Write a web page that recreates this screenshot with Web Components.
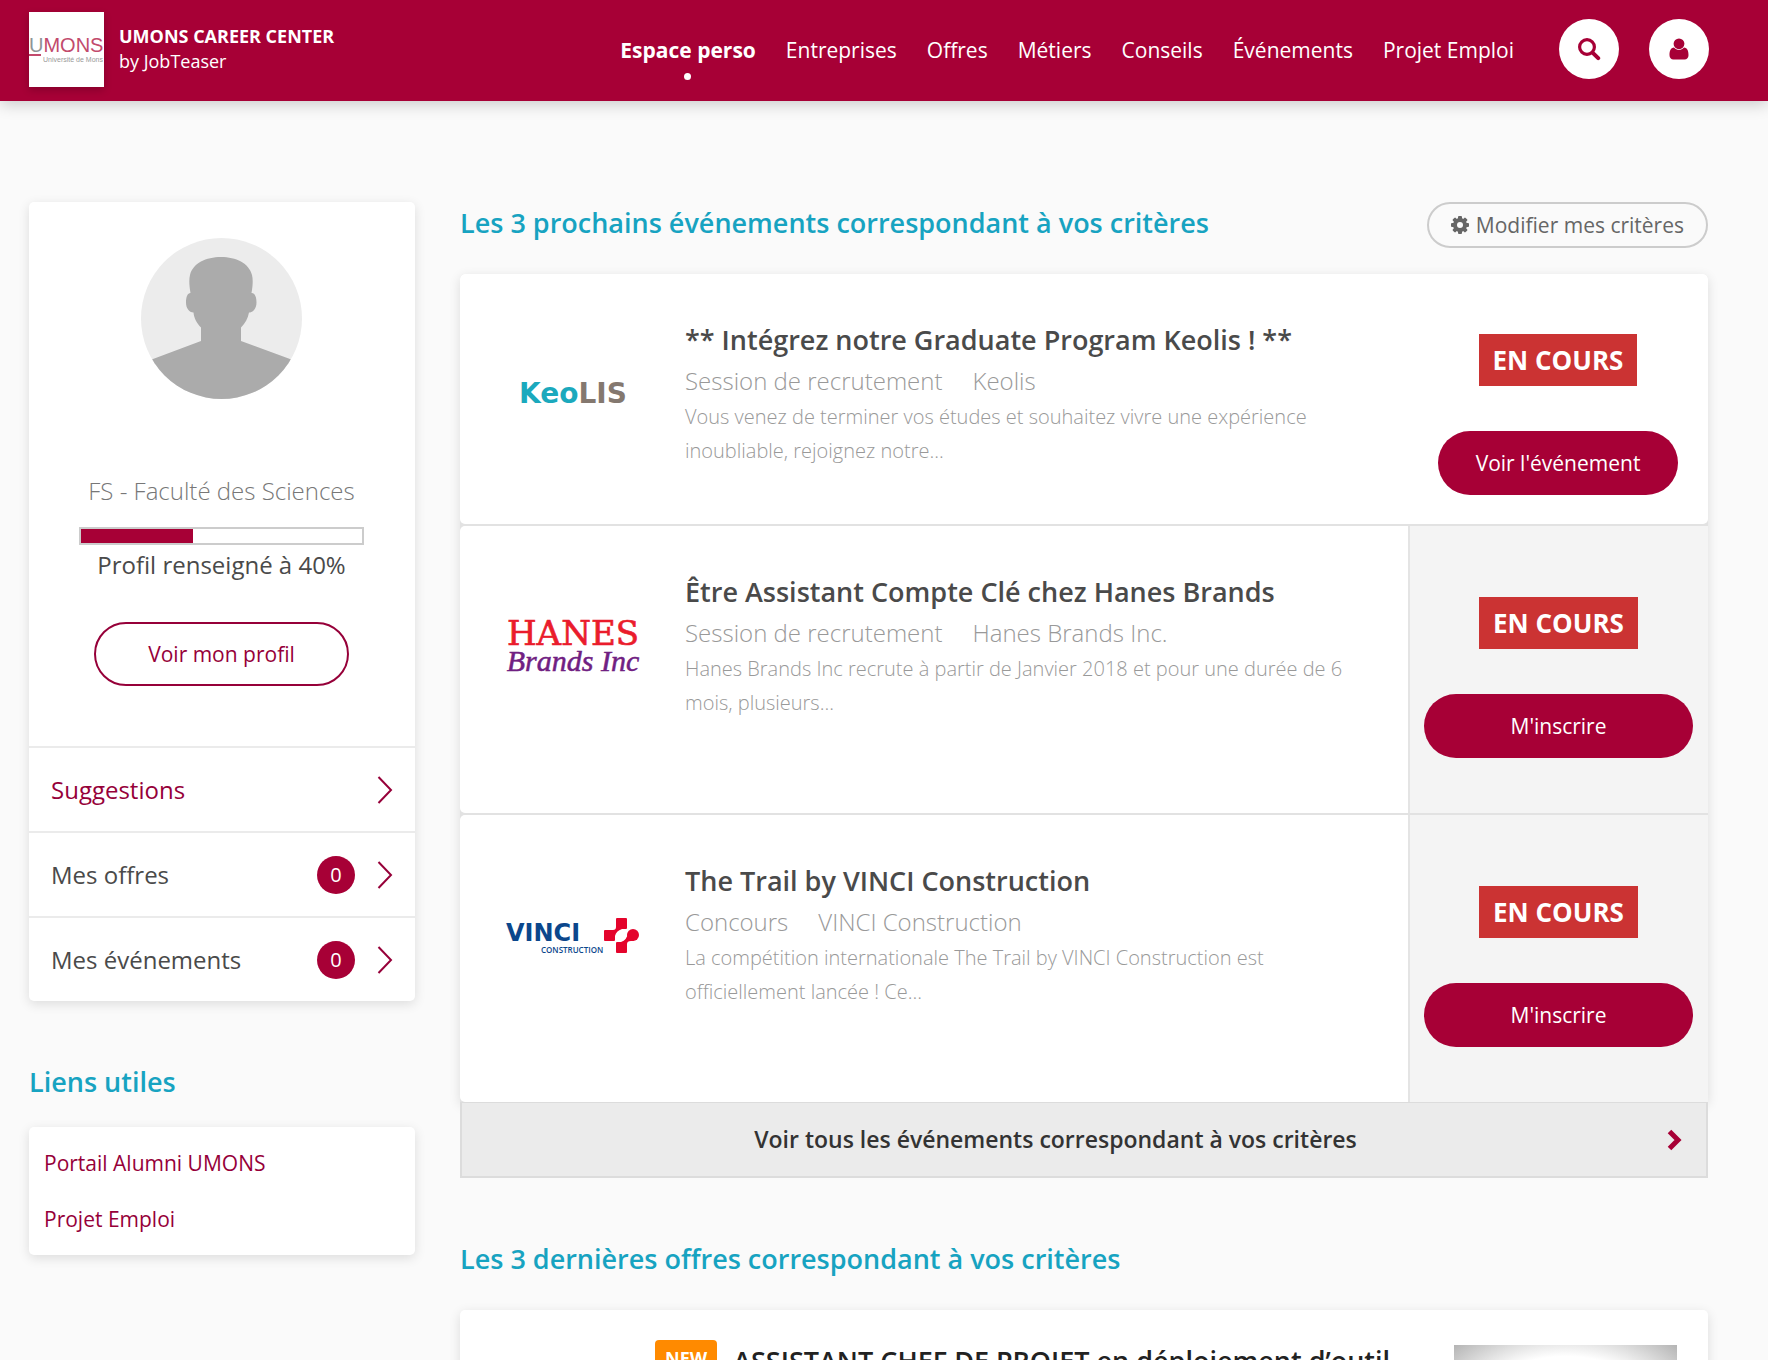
<!DOCTYPE html>
<html lang="fr">
<head>
    <meta charset="utf-8">
    <meta name="viewport" content="width=device-width, initial-scale=1">
    <title>UMONS Career Center by JobTeaser</title>
    <style>
        :root {
            --brand: #a70036;
            --link: #960039;
            --accent: #17a3c1;
            --text: #4a4a4a;
        }
        body {
            margin: 0;
            height: 100vh;
            overflow: hidden;
            background: #fafafa;
            color: var(--text);
            font-family: "Open Sans", sans-serif;
            font-size: 21px;
        }
    </style>
</head>
<body>
    <career-page>
        <career-header slot="header">
            <nav-item current>Espace perso</nav-item>
            <nav-item>Entreprises</nav-item>
            <nav-item>Offres</nav-item>
            <nav-item>Métiers</nav-item>
            <nav-item>Conseils</nav-item>
            <nav-item>Événements</nav-item>
            <nav-item>Projet Emploi</nav-item>
        </career-header>

        <profile-card slot="aside" value="40">
            <span slot="faculty">FS - Faculté des Sciences</span>
            <profile-link highlight>Suggestions</profile-link>
            <profile-link count="0">Mes offres</profile-link>
            <profile-link count="0">Mes événements</profile-link>
        </profile-card>
        <section-title slot="aside" class="spaced">Liens utiles</section-title>
        <link-list slot="aside">
            <a href="#">Portail Alumni UMONS</a>
            <a href="#">Projet Emploi</a>
        </link-list>

        <section-title>Les 3 prochains événements correspondant à vos critères
            <criteria-button slot="action">Modifier mes critères</criteria-button>
        </section-title>
        <event-list>
            <event-card action="Voir l'événement">
                <company-logo slot="logo" name="keolis"></company-logo>
                <span slot="title">** Intégrez notre Graduate Program Keolis ! **</span>
                <span slot="kind">Session de recrutement</span>
                <span slot="company">Keolis</span>
                Vous venez de terminer vos études et souhaitez vivre une expérience inoubliable, rejoignez notre...
            </event-card>
            <event-card action="M'inscrire" shaded>
                <company-logo slot="logo" name="hanes"></company-logo>
                <span slot="title">Être Assistant Compte Clé chez Hanes Brands</span>
                <span slot="kind">Session de recrutement</span>
                <span slot="company">Hanes Brands Inc.</span>
                Hanes Brands Inc recrute à partir de Janvier 2018 et pour une durée de 6 mois, plusieurs...
            </event-card>
            <event-card action="M'inscrire" shaded>
                <company-logo slot="logo" name="vinci"></company-logo>
                <span slot="title">The Trail by VINCI Construction</span>
                <span slot="kind">Concours</span>
                <span slot="company">VINCI Construction</span>
                La compétition internationale The Trail by VINCI Construction est officiellement lancée ! Ce...
            </event-card>
            <span slot="more">Voir tous les événements correspondant à vos critères</span>
        </event-list>

        <section-title class="spaced">Les 3 dernières offres correspondant à vos critères</section-title>
        <offer-card>ASSISTANT CHEF DE PROJET en déploiement d’outil</offer-card>
    </career-page>

    <script>
        // Base element: every component gives its markup and its styles
        class BaseElement extends HTMLElement {

            constructor() {
                super();
                this.attachShadow({ mode: "open" });
            }

            getTemplate() {
                const template = document.createElement('template');
                template.innerHTML = `
                <style>
                    * { box-sizing: border-box; }
                    h2, h3, p { margin: 0; }
                    a { color: inherit; text-decoration: none; }
                    button { font: inherit; cursor: pointer; }
                    svg { display: block; }
                    ${this.getStyles()}
                </style>
                ${this.getMarkup()}
                `;
                return template;
            }

            connectedCallback() {
                if (!this.shadowRoot.firstChild) {
                    this.shadowRoot.appendChild(this.getTemplate().content.cloneNode(true));
                }
            }
        }

        class CareerPage extends BaseElement {
            getMarkup() {
                return `
                <slot name="header"></slot>
                <div class="columns">
                    <aside><slot name="aside"></slot></aside>
                    <main><slot></slot></main>
                </div>
                `;
            }
            getStyles() {
                return `
                :host { display: block; }
                .columns {
                    display: flex;
                    gap: 45px;
                    padding: 101px 60px 60px 29px;
                }
                aside { flex: 0 0 386px; }
                main { flex: 1; min-width: 0; }
                `;
            }
        }

        class CareerHeader extends BaseElement {
            getMarkup() {
                return `
                <header>
                    <a class="brand" href="#">
                        <svg class="logo" width="75" height="75" viewBox="0 0 75 75" font-family="Liberation Sans, sans-serif">
                            <rect width="75" height="75" fill="#fff"/>
                            <text x="0" y="40" font-size="20" fill="#8f9496">U<tspan fill="#c24a6c">MONS</tspan></text>
                            <rect y="42" width="12" height="2" fill="#c24a6c"/>
                            <text x="14" y="50" font-size="7" fill="#999">Université de Mons</text>
                        </svg>
                        <span><b>UMONS CAREER CENTER</b><br>by JobTeaser</span>
                    </a>
                    <nav><slot></slot></nav>
                    <div class="tools">
                        <button type="button" aria-label="Rechercher">
                            <svg width="24" height="24" viewBox="0 0 24 24" fill="none" stroke="currentColor" stroke-linecap="round">
                                <circle cx="10" cy="10" r="7.4" stroke-width="3.2"/>
                                <path d="M15.8 15.8l5.4 5.4" stroke-width="4"/>
                            </svg>
                        </button>
                        <button type="button" aria-label="Mon compte">
                            <svg width="20" height="22" viewBox="0 0 20 22" fill="currentColor">
                                <circle cx="10" cy="5.8" r="5.4"/>
                                <path d="M5 9.600c1.300 1.400 3 2.300 5 2.300s3.700-.9 5-2.300c3.200.3 4.500 3.100 4.500 7.600 0 2.600-1.600 4.300-3.900 4.300H4.400C2.100 21.500.5 19.800.5 17.200.5 12.700 1.800 9.900 5 9.600z"/>
                            </svg>
                        </button>
                    </div>
                </header>
                `;
            }
            getStyles() {
                return `
                :host { display: block; }
                header {
                    box-sizing: border-box;
                    display: flex;
                    align-items: center;
                    height: 101px;
                    padding: 0 59px 3px 29px;
                    background: var(--brand);
                    color: #fff;
                    box-shadow: 0 3px 15px rgba(0, 0, 0, .2);
                }
                .brand {
                    display: flex;
                    align-items: center;
                    gap: 15px;
                    margin-right: auto;
                    font-size: 18px;
                    line-height: 25px;
                }
                .logo { box-shadow: 0 3px 8px rgba(0, 0, 0, .2); }
                nav { display: flex; gap: 30px; padding-top: 2px; }
                .tools { display: flex; gap: 30px; margin-left: 45px; }
                button {
                    display: flex;
                    align-items: center;
                    justify-content: center;
                    width: 60px;
                    height: 60px;
                    padding: 0;
                    border: 0;
                    border-radius: 50%;
                    background: #fff;
                    color: var(--brand);
                }
                `;
            }
        }

        class NavItem extends BaseElement {
            getMarkup() {
                return `<a href="#"><slot></slot></a>`;
            }
            getStyles() {
                return `
                :host { display: block; position: relative; white-space: nowrap; }
                :host([current]) { font-weight: bold; }
                :host([current])::after {
                    content: "";
                    position: absolute;
                    top: 37px;
                    left: calc(50% - 4px);
                    width: 7px;
                    height: 7px;
                    border-radius: 50%;
                    background: #fff;
                }
                `;
            }
        }

        class ProfileCard extends BaseElement {
            getMarkup() {
                const value = this.getAttribute('value');
                return `
                <section>
                    <svg width="161" height="161" viewBox="0 0 161 161">
                        <clipPath id="round"><circle cx="80.5" cy="80.5" r="80.5"/></clipPath>
                        <g clip-path="url(#round)">
                            <rect width="161" height="161" fill="#ececec"/>
                            <path fill="#ababab" d="M49.500 55C48 46 48 41 49 37c3-12 16-18 31-18s28 6 31 18c1 4 1 10-.5 18 3.500 0 5 4 5 9.500s-3 10-7.500 10c-1 6-4 11-8 15V103l49 18c8 3 12 10 14 40H-1c2-30 5-37 13-40l48-18V89.500c-4-4-7-9-7.500-15-4.500 0-7.500-4.500-7.500-10s1.500-9.500 4.500-9.500z"/>
                        </g>
                    </svg>
                    <p class="faculty"><slot name="faculty"></slot></p>
                    <div class="bar" role="progressbar" aria-valuenow="${value}" aria-valuemin="0" aria-valuemax="100" aria-labelledby="label"><i></i></div>
                    <p id="label">Profil renseigné à ${value}%</p>
                    <a class="button" href="#">Voir mon profil</a>
                </section>
                <slot></slot>
                `;
            }
            getStyles() {
                return `
                :host {
                    display: block;
                    border-radius: 5px;
                    background: #fff;
                    box-shadow: 0 3px 12px rgba(0, 0, 0, .12);
                }
                section {
                    display: flex;
                    flex-direction: column;
                    align-items: center;
                    padding: 36px 51px 60px 50px;
                    font-size: 24px;
                    line-height: 36px;
                }
                .faculty {
                    margin: 74px 0 18px;
                    color: #777;
                    font-weight: 300;
                }
                .bar {
                    align-self: stretch;
                    height: 18px;
                    margin-bottom: 2px;
                    border: 2px solid #ccc;
                }
                .bar i {
                    display: block;
                    width: ${this.getAttribute('value')}%;
                    height: 100%;
                    background: var(--brand);
                }
                .button {
                    margin-top: 39px;
                    padding: 0 52px;
                    border: 2px solid var(--link);
                    border-radius: 32px;
                    color: var(--link);
                    font-size: 21px;
                    line-height: 60px;
                }
                `;
            }
        }

        class ProfileLink extends BaseElement {
            getMarkup() {
                const count = this.getAttribute('count');
                return `
                <a href="#">
                    <slot></slot>
                    ${count === null ? '' : `<span class="count">${count}</span>`}
                    <svg width="16" height="28" viewBox="0 0 16 28" fill="none" stroke="var(--link)" stroke-width="2">
                        <path d="M1.500 1l12.500 13L1.500 27"/>
                    </svg>
                </a>
                `;
            }
            getStyles() {
                return `
                :host { display: block; border-top: 2px solid #ebebeb; }
                :host([highlight]) { color: var(--link); }
                a {
                    display: flex;
                    align-items: center;
                    gap: 22px;
                    height: 83px;
                    padding: 0 22px;
                    font-size: 24px;
                }
                svg { margin-left: auto; }
                .count {
                    width: 38px;
                    margin-left: auto;
                    border-radius: 50%;
                    background: var(--brand);
                    color: #fff;
                    font-size: 20px;
                    line-height: 38px;
                    text-align: center;
                }
                .count + svg { margin-left: 0; }
                `;
            }
        }

        class SectionTitle extends BaseElement {
            getMarkup() {
                return `<h2><slot></slot></h2><slot name="action"></slot>`;
            }
            getStyles() {
                return `
                :host {
                    display: flex;
                    justify-content: space-between;
                    align-items: flex-start;
                    min-height: 46px;
                    margin-bottom: 26px;
                    color: var(--accent);
                }
                :host([slot=aside]) { margin-bottom: 20px; }
                :host(.spaced) { margin-top: 60px; }
                h2 {
                    font-size: 27px;
                    font-weight: 600;
                    line-height: 41px;
                }
                `;
            }
        }

        class CriteriaButton extends BaseElement {
            getMarkup() {
                // eight teeth turned round the hub
                const teeth = [0, 45, 90, 135].map(a => `<rect x="7" y="0" width="4" height="18" rx="1" transform="rotate(${a} 9 9)"/>`).join('');
                return `
                <button type="button">
                    <svg width="18" height="18" viewBox="0 0 18 18" fill="currentColor">
                        <mask id="hub"><rect width="18" height="18" fill="#fff"/><circle cx="9" cy="9" r="3" fill="#000"/></mask>
                        <g mask="url(#hub)"><circle cx="9" cy="9" r="7"/>${teeth}</g>
                    </svg>
                    <slot></slot>
                </button>
                `;
            }
            getStyles() {
                return `
                :host { display: block; }
                button {
                    display: flex;
                    align-items: center;
                    gap: 7px;
                    padding: 0 22px;
                    border: 2px solid #ccc;
                    border-radius: 23px;
                    background: none;
                    color: #666;
                    line-height: 42px;
                    white-space: nowrap;
                }
                `;
            }
        }

        class LinkList extends BaseElement {
            getMarkup() {
                return `<slot></slot>`;
            }
            getStyles() {
                return `
                :host {
                    display: flex;
                    flex-direction: column;
                    padding: 8px 15px;
                    border-radius: 5px;
                    background: #fff;
                    box-shadow: 0 3px 12px rgba(0, 0, 0, .12);
                }
                ::slotted(a) {
                    color: var(--link);
                    line-height: 56px;
                    text-decoration: none;
                }
                `;
            }
        }

        class EventList extends BaseElement {
            getMarkup() {
                return `
                <div class="events"><slot></slot></div>
                <a href="#">
                    <slot name="more"></slot>
                    <svg width="15" height="22" viewBox="0 0 15 22" fill="none" stroke="var(--brand)" stroke-width="5">
                        <path d="M2.500 2.500l8.500 8.500-8.500 8.500"/>
                    </svg>
                </a>
                `;
            }
            getStyles() {
                return `
                :host { display: block; }
                .events {
                    display: flex;
                    flex-direction: column;
                    gap: 2px;
                    border-radius: 5px 5px 0 0;
                    background: #e2e2e2;
                    box-shadow: 0 3px 12px rgba(0, 0, 0, .12);
                }
                a {
                    position: relative;
                    display: flex;
                    align-items: center;
                    padding: 0 24px;
                    border: 2px solid #dcdcdc;
                    border-top-width: 1px;
                    background: #ebebeb;
                    color: #333;
                    font-size: 23px;
                    font-weight: 600;
                    line-height: 73px;
                }
                slot[name=more] {
                    display: block;
                    flex: 1;
                    padding-right: 42px;
                    text-align: center;
                }
                `;
            }
        }

        class EventCard extends BaseElement {
            getMarkup() {
                return `
                <div class="logo"><slot name="logo"></slot></div>
                <article>
                    <h3><slot name="title"></slot></h3>
                    <div class="meta"><slot name="kind"></slot><slot name="company"></slot></div>
                    <p><slot></slot></p>
                </article>
                <div class="state">
                    <strong>EN COURS</strong>
                    <button type="button">${this.getAttribute('action')}</button>
                </div>
                `;
            }
            getStyles() {
                return `
                :host {
                    display: flex;
                    border-radius: 5px;
                    background: #fff;
                }
                .logo {
                    display: flex;
                    flex: 0 0 225px;
                    align-items: center;
                    justify-content: center;
                    height: 150px;
                    margin-top: 45px;
                }
                article {
                    flex: 1;
                    padding: 45px 60px 0 0;
                    color: #999;
                    font-weight: 300;
                }
                h3 {
                    color: var(--text);
                    font-size: 27px;
                    font-weight: 600;
                    line-height: 41px;
                }
                .meta {
                    display: flex;
                    gap: 30px;
                    margin-bottom: -2px;
                    font-size: 24px;
                    line-height: 42px;
                }
                p { font-size: 20px; line-height: 34px; }
                .state {
                    display: flex;
                    flex: 0 0 300px;
                    flex-direction: column;
                    align-items: center;
                    gap: 45px;
                    padding: 60px 15px 29px;
                }
                strong {
                    padding: 0 14px;
                    background: #cb3333;
                    color: #fff;
                    font-size: 26px;
                    line-height: 52px;
                }
                button {
                    min-width: 240px;
                    padding: 0 30px;
                    border: 0;
                    border-radius: 32px;
                    background: var(--brand);
                    color: #fff;
                    line-height: 64px;
                }
                :host([shaded]) .state {
                    padding: 71px 15px 55px 14px;
                    border-left: 2px solid #e4e4e4;
                    background: #f4f4f4;
                }
                :host([shaded]) button { align-self: stretch; }
                `;
            }
        }

        class CompanyLogo extends BaseElement {
            getMarkup() {
                const logos = {
                    keolis: `
                        <svg width="112" height="40" viewBox="0 0 112 40" font-family="DejaVu Sans, sans-serif" font-size="28" font-weight="bold">
                            <text x="56" y="25" text-anchor="middle" fill="#1ba9bd">Keo<tspan fill="#84786f">LIS</tspan></text>
                        </svg>`,
                    hanes: `
                        <svg width="136" height="60" viewBox="0 0 136 60" text-anchor="middle">
                            <text x="68" y="29" font-family="DejaVu Serif, serif" font-size="34" fill="#ea1c2c" stroke="#ea1c2c" stroke-width=".7">HANES</text>
                            <text x="68" y="55" font-family="Liberation Serif, serif" font-size="30" font-style="italic" fill="#702082" stroke="#702082" stroke-width=".5">Brands Inc</text>
                        </svg>`,
                    vinci: `
                        <svg width="134" height="42" viewBox="0 0 134 42">
                            <g fill="#0b478c">
                                <text x="0" y="27" font-family="DejaVu Sans, sans-serif" font-size="24" font-weight="bold">VINCI</text>
                                <text x="35" y="39" font-family="Open Sans, sans-serif" font-size="8" font-weight="600">CONSTRUCTION</text>
                            </g>
                            <g fill="#e4042c">
                                <rect x="110" y="4" width="11" height="11" rx="1"/>
                                <rect x="98" y="16" width="11" height="11" rx="1"/>
                                <path d="M110 11v2q0 3-3 3h-3v6h5q1-5 7-7v-4z"/>
                                <circle cx="127" cy="21" r="6"/>
                                <rect x="110" y="28" width="11" height="11" rx="1"/>
                                <path d="M121 32v-2q0-3 4-3h3l-6-8q-1 7-7 9v4z"/>
                            </g>
                        </svg>`
                };
                return logos[this.getAttribute('name')];
            }
            getStyles() {
                return `
                :host { display: block; }
                :host([name=keolis]) { padding-top: 8px; }
                svg { overflow: visible; }
                `;
            }
        }

        class OfferCard extends BaseElement {
            getMarkup() {
                return `
                <span class="new">NEW</span>
                <h3><slot></slot></h3>
                <div class="thumb"></div>
                `;
            }
            getStyles() {
                return `
                :host {
                    display: flex;
                    align-items: flex-start;
                    height: 250px;
                    padding: 30px 31px 0 195px;
                    border-radius: 5px;
                    background: #fff;
                    box-shadow: 0 3px 12px rgba(0, 0, 0, .12);
                }
                .new {
                    padding: 0 10px;
                    margin-right: 16px;
                    border-radius: 4px;
                    background: #ff8a00;
                    color: #fff;
                    font-size: 18px;
                    font-weight: bold;
                    line-height: 36px;
                }
                h3 {
                    flex: 1;
                    color: #222;
                    font-size: 27px;
                    font-weight: 600;
                    line-height: 41px;
                }
                .thumb {
                    width: 223px;
                    height: 150px;
                    margin-top: 5px;
                    background: radial-gradient(ellipse at center, #fff 60%, #b4b4b4 100%);
                }
                `;
            }
        }

        customElements.define('career-page', CareerPage);
        customElements.define('career-header', CareerHeader);
        customElements.define('nav-item', NavItem);
        customElements.define('profile-card', ProfileCard);
        customElements.define('profile-link', ProfileLink);
        customElements.define('section-title', SectionTitle);
        customElements.define('criteria-button', CriteriaButton);
        customElements.define('link-list', LinkList);
        customElements.define('event-list', EventList);
        customElements.define('event-card', EventCard);
        customElements.define('company-logo', CompanyLogo);
        customElements.define('offer-card', OfferCard);
    </script>
</body>
</html>
